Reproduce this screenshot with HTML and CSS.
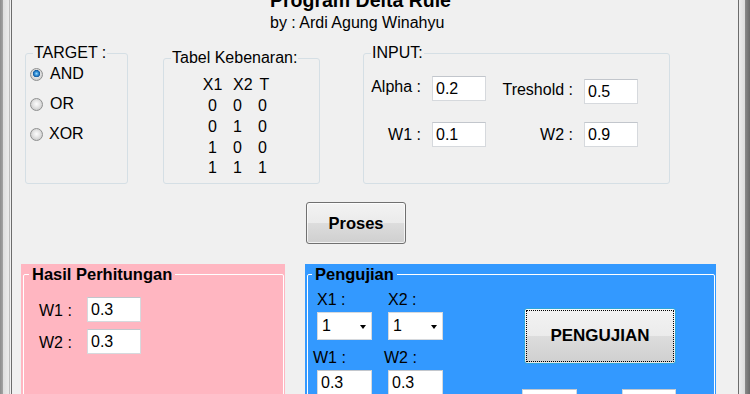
FILE: index.html
```html
<!DOCTYPE html>
<html lang="id">
<head>
<meta charset="utf-8">
<title>Program Delta Rule</title>
<link rel="stylesheet" href="styles.css">
</head>
<body>
<div class="window">
  <div class="frame-left"></div>
  <main class="form">
    <header class="head">
      <div class="title">Program Delta Rule</div>
      <div class="subtitle">by : Ardi Agung Winahyu</div>
    </header>

    <div class="top-row">
      <div class="group g-target">
        <div class="legend">TARGET :</div>
        <div class="radios">
          <div class="radio-row"><span class="radio checked"></span><span class="radio-text">AND</span></div>
          <div class="radio-row"><span class="radio"></span><span class="radio-text">OR</span></div>
          <div class="radio-row"><span class="radio"></span><span class="radio-text xor">XOR</span></div>
        </div>
      </div>

      <div class="group g-table">
        <div class="legend">Tabel Kebenaran:</div>
        <div class="truth">
          <span class="th">X1</span><span class="th th2">X2</span><span class="th th3">T</span>
          <span>0</span><span>0</span><span>0</span>
          <span class="r2">0</span><span class="r2">1</span><span class="r2">0</span>
          <span>1</span><span>0</span><span>0</span>
          <span>1</span><span>1</span><span>1</span>
        </div>
      </div>

      <div class="group g-input">
        <div class="legend">INPUT:</div>
        <div class="input-grid">
          <span class="lbl lbl-up">Alpha :</span>
          <div class="tb">0.2</div>
          <span class="lbl lbl-up lbl-off">Treshold :</span>
          <div class="tb tb-off">0.5</div>
          <span class="lbl">W1 :</span>
          <div class="tb">0.1</div>
          <span class="lbl">W2 :</span>
          <div class="tb">0.9</div>
        </div>
      </div>
    </div>

    <div class="btn-row">
      <button class="btn btn-proses">Proses</button>
    </div>

    <div class="bottom-row">
      <section class="panel panel-pink">
        <div class="group2">
          <div class="legend2">Hasil Perhitungan</div>
          <div class="hasil-grid">
            <span class="lbl2">W1 :</span><div class="tb">0.3</div>
            <span class="lbl2">W2 :</span><div class="tb">0.3</div>
          </div>
        </div>
      </section>

      <section class="panel panel-blue">
        <div class="group2">
          <div class="legend2">Pengujian</div>
          <div class="peng-body">
            <div class="peng-grid">
              <span class="plbl">X1 :</span><span class="plbl">X2 :</span>
              <div class="combo"><span>1</span><span class="arrow"></span></div>
              <div class="combo"><span>1</span><span class="arrow"></span></div>
              <span class="plbl plbl-w">W1 :</span><span class="plbl plbl-w">W2 :</span>
              <div class="tb">0.3</div>
              <div class="tb">0.3</div>
            </div>
            <div class="peng-right">
              <button class="btn btn-uji">PENGUJIAN</button>
              <div class="out-row">
                <div class="tb out1"></div>
                <div class="tb out2"></div>
              </div>
            </div>
          </div>
        </div>
      </section>
    </div>
  </main>
  <div class="frame-right"></div>
</div>
</body>
</html>
```

FILE: styles.css
```css
* { box-sizing: border-box; }

html, body {
  margin: 0;
  padding: 0;
  background: #f0f0f0;
}

body {
  font-family: "Liberation Sans", Arial, sans-serif;
  font-size: 16px;
  color: #000;
}

.window {
  display: flex;
  width: 750px;
  height: 394px;
  overflow: hidden;
}

.frame-left {
  width: 12px;
  flex: none;
  background: linear-gradient(to right,
    #8c8c8c 0, #a4a4a4 3px,
    #dedede 3px, #ebebeb 9px,
    #bcbcbc 9px, #bcbcbc 10px,
    #f0f0f0 10px, #f0f0f0 11px,
    #6c6c6c 11px, #6c6c6c 12px);
}

.frame-right {
  width: 12px;
  flex: none;
  background: linear-gradient(to right,
    #6c6c6c 0, #6c6c6c 1px,
    #ececec 1px, #dcdcdc 7px,
    #8a8a8a 7px, #6a6a6a 12px);
}

.form {
  flex: 1;
  display: flex;
  flex-direction: column;
  background: #f0f0f0;
  min-width: 0;
}

/* header */
.head {
  padding-left: 258px;
}
.title {
  margin-top: -10px;
  font-weight: bold;
  font-size: 19.5px;
  line-height: 20px;
}
.subtitle {
  margin-top: 4px;
  line-height: 18px;
}

/* top group boxes */
.top-row {
  display: flex;
  align-items: flex-start;
  margin-top: 21px;
  padding-left: 13px;
}

.group {
  border: 1px solid #d5dfe5;
  border-radius: 3px;
}

.legend {
  display: block;
  width: max-content;
  margin: -9px 0 0 7px;
  padding: 0 1px;
  line-height: 16px;
  background: #f0f0f0;
}

.g-target {
  width: 103px;
  height: 131px;
}
.g-table {
  width: 157px;
  height: 126px;
  margin: 5px 0 0 35px;
}
.g-input {
  width: 307px;
  height: 131px;
  margin-left: 43px;
}

/* radios */
.radios {
  display: flex;
  flex-direction: column;
  gap: 4px;
  padding-left: 4px;
}
.radio-row {
  display: flex;
  align-items: center;
  height: 26px;
}
.radio {
  width: 13px;
  height: 13px;
  border-radius: 50%;
  border: 1px solid #8f9090;
  background: radial-gradient(circle at 50% 45%, #fdfdfd 0, #e8e8e8 3px, #cfcfcf 6px);
  flex: none;
}
.radio.checked {
  background:
    radial-gradient(circle at 50% 42%, #a6dcf8 0, #3b9ae0 1.6px, #11589e 3.4px, rgba(0,0,0,0) 3.9px),
    radial-gradient(circle at 50% 45%, #fdfdfd 0, #e8e8e8 3px, #cfcfcf 6px);
}
.radio-text {
  margin-left: 7px;
  line-height: 18px;
}
.radio-text.xor {
  margin-left: 6px;
}

/* truth table */
.truth {
  display: grid;
  grid-template-columns: repeat(3, 25px);
  margin: 9px 0 0 36px;
  line-height: 20.5px;
  text-align: center;
}
.th2 { padding-left: 8px; }
.th3 { padding-left: 4px; }
.r2 { padding-top: 1px; }

/* input grid */
.input-grid {
  display: grid;
  grid-template-columns: 57px 54px 76px 54px;
  column-gap: 11px;
  row-gap: 18px;
  grid-template-rows: 28px 25px;
  margin-top: 15px;
  align-items: start;
}
.lbl {
  text-align: right;
  line-height: 18px;
  align-self: center;
}
.lbl-up {
  align-self: start;
  margin-top: 2px;
}
.lbl-off {
  margin-top: 5px;
}
.tb-off {
  margin-top: 3px;
}

.tb {
  width: 54px;
  height: 25px;
  background: #fff;
  border: 1px solid #d6d9dd;
  border-top-color: #c2c6cc;
  padding-left: 3px;
  line-height: 23px;
  white-space: nowrap;
}

/* buttons */
.btn-row {
  margin-top: 18px;
  padding-left: 294px;
  display: flex;
}
.btn {
  font-family: "Liberation Sans", Arial, sans-serif;
  font-weight: bold;
  font-size: 16.5px;
  color: #000;
  border: 1px solid #707070;
  border-radius: 3px;
  background: linear-gradient(to bottom, #f3f3f3 0, #ebebeb 50%, #dddddd 50%, #cfcfcf 100%);
  box-shadow: inset 0 0 0 1px rgba(255,255,255,0.7);
  padding: 0;
  display: flex;
  align-items: center;
  justify-content: center;
}
.btn-proses {
  width: 100px;
  height: 42px;
}
.btn-uji {
  width: 152px;
  height: 56px;
  font-size: 17px;
  border-color: #2ea6dc;
  box-shadow: inset 0 0 0 1px rgba(255,255,255,0.5);
  outline: 1px dotted #000;
  outline-offset: -3px;
}

/* bottom panels */
.bottom-row {
  display: flex;
  align-items: flex-start;
  margin-top: 20px;
  padding-left: 9px;
}
.panel {
  height: 140px;
  padding: 10px 1px 0 2px;
  flex: none;
}
.panel-pink {
  width: 264px;
  background: #ffb6c1;
}
.panel-blue {
  width: 411px;
  margin-left: 20px;
  background: #3399ff;
}
.group2 {
  border: 1px solid #fff;
  border-radius: 2px;
  height: 140px;
}
.legend2 {
  display: block;
  width: max-content;
  margin: -9px 0 0 5px;
  padding: 0 3px;
  font-weight: bold;
  font-size: 16.5px;
  line-height: 17px;
}
.panel-pink .legend2 { background: #ffb6c1; }
.panel-blue .legend2 { background: #3399ff; margin-left: 4px; }

.hasil-grid {
  display: grid;
  grid-template-columns: 48px 54px;
  row-gap: 7px;
  margin-top: 14px;
  padding-left: 15px;
}
.lbl2 {
  align-self: center;
  line-height: 18px;
  padding-top: 2px;
}

/* pengujian */
.peng-body {
  display: flex;
  align-items: flex-start;
}
.peng-grid {
  display: grid;
  grid-template-columns: 55px 55px;
  column-gap: 16px;
  padding-left: 9px;
}
.plbl {
  line-height: 18px;
  margin-top: 8px;
}
.plbl-w {
  margin-top: 9px;
  margin-left: -4px;
}
.combo {
  margin-top: 3px;
  height: 28px;
  background: #fff;
  border: 1px solid #d6d9dd;
  display: flex;
  align-items: center;
  justify-content: space-between;
  padding: 0 5px 0 4px;
  line-height: 18px;
}
.arrow {
  width: 0;
  height: 0;
  border-left: 3.5px solid transparent;
  border-right: 3.5px solid transparent;
  border-top: 4px solid #000;
  margin-top: 2px;
}
.peng-grid .tb {
  width: 55px;
  margin-top: 3px;
}
.peng-right {
  display: flex;
  flex-direction: column;
  margin-left: 81px;
  margin-top: 25px;
}
.out-row {
  display: flex;
  margin-top: 25px;
  margin-left: -2px;
}
.out1 { width: 55px; }
.out2 { width: 54px; margin-left: 45px; }
```
